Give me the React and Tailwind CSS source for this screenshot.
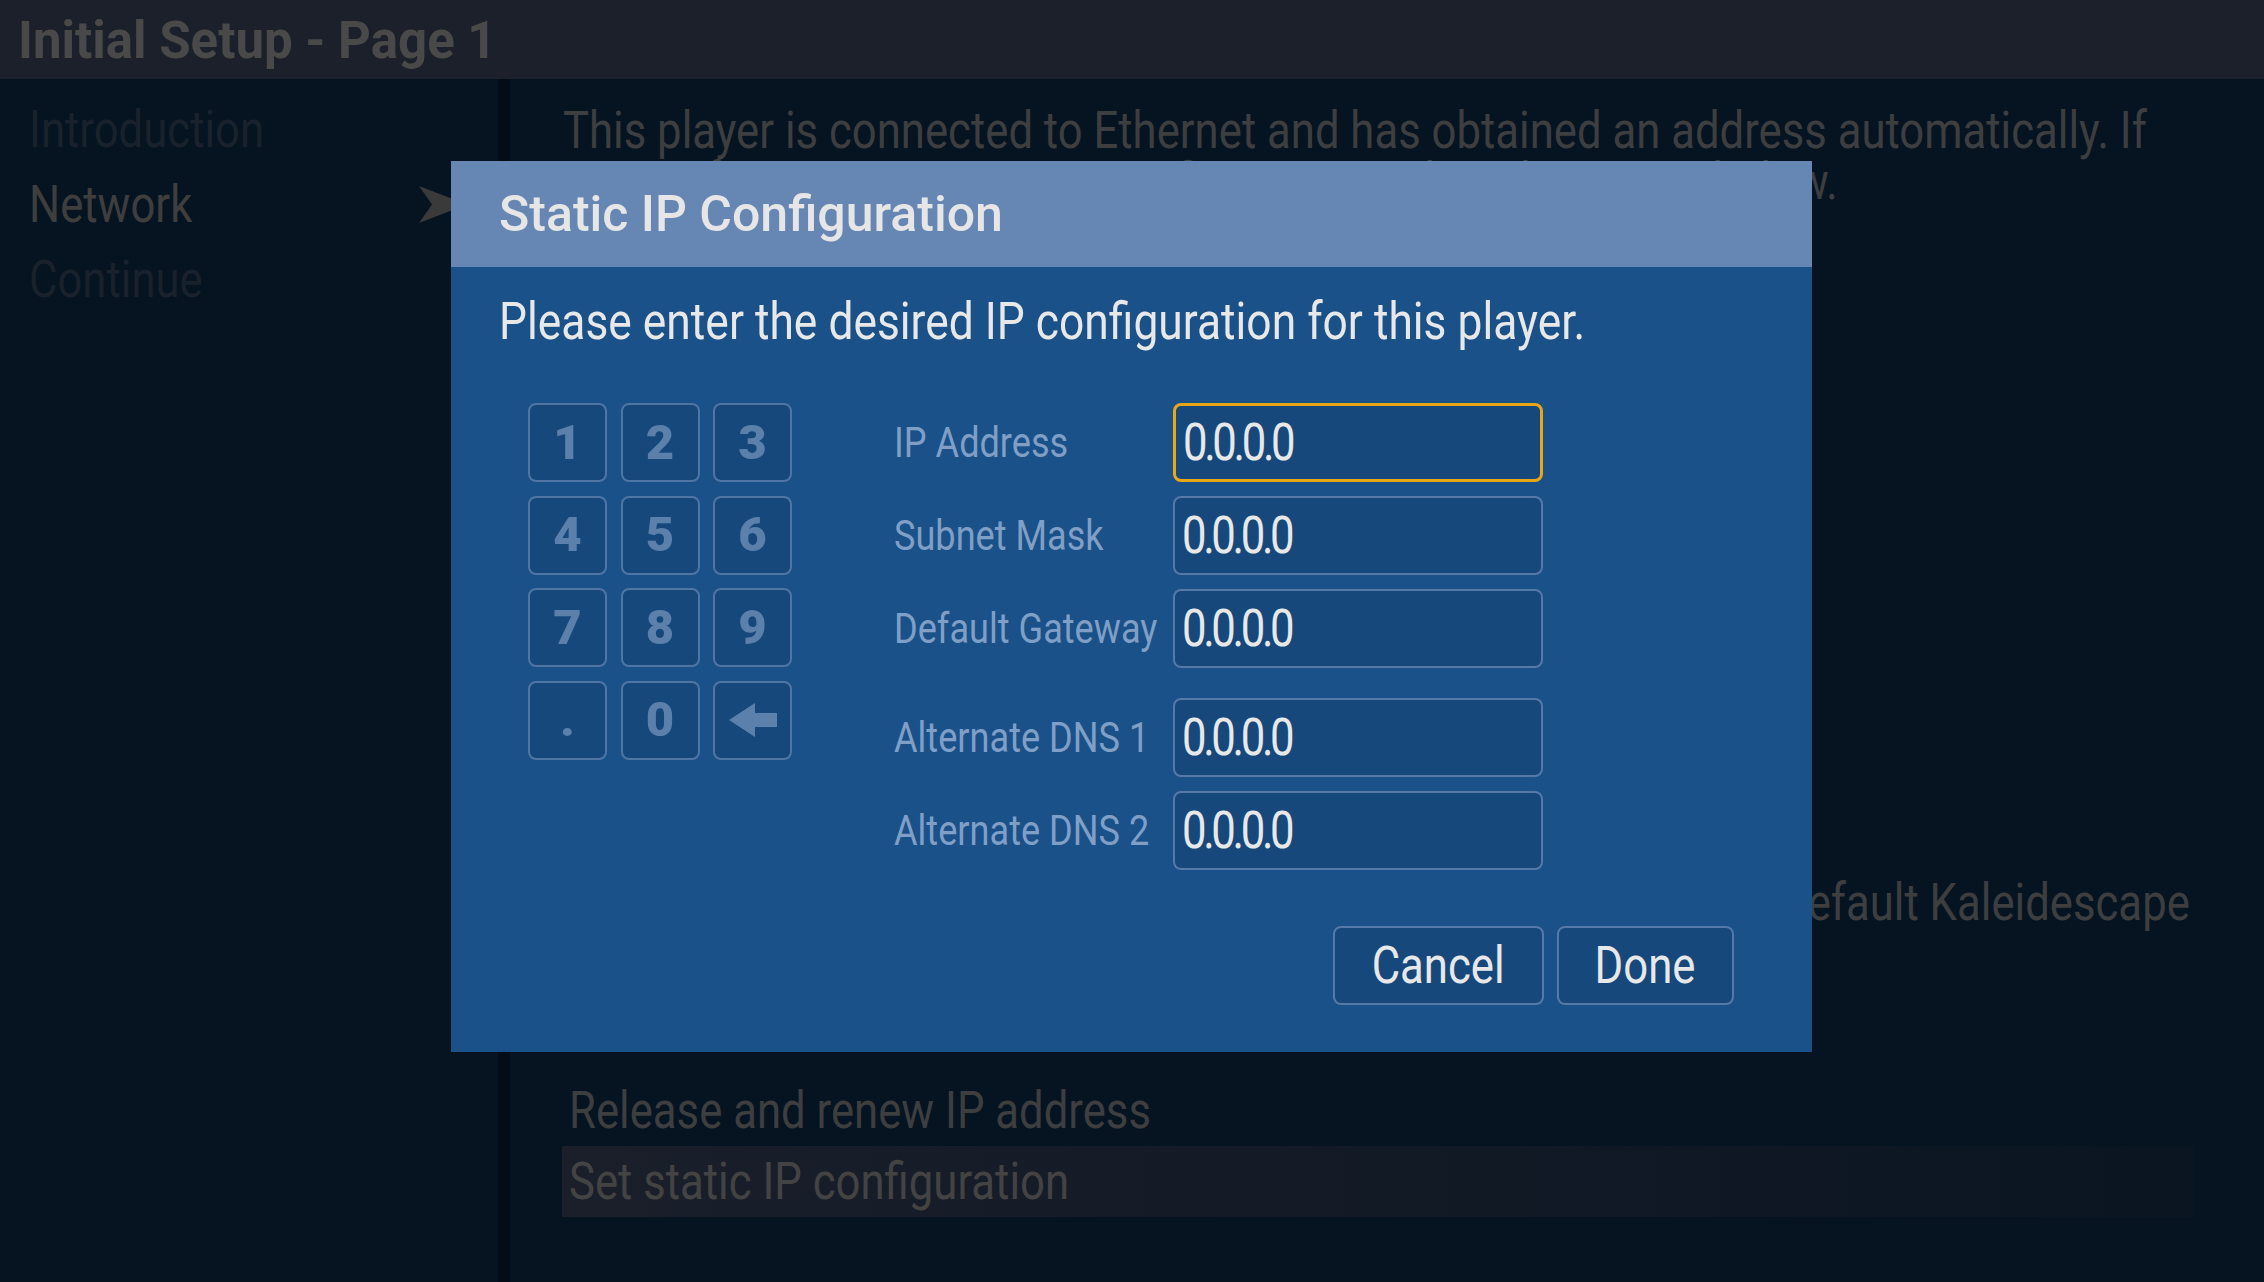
import { useState } from 'react';

const ROBOTO = { fontFamily: 'Roboto, "Liberation Sans", sans-serif' };

const KEYS = ['1', '2', '3', '4', '5', '6', '7', '8', '9', '.', '0', 'back'];

const FIELDS = [
  { id: 'ip', label: 'IP Address' },
  { id: 'mask', label: 'Subnet Mask' },
  { id: 'gateway', label: 'Default Gateway' },
  { id: 'dns1', label: 'Alternate DNS 1', spaced: true },
  { id: 'dns2', label: 'Alternate DNS 2' },
];

// the player UI uses a condensed face; squeeze Roboto to get the same widths
function Cond({ children, className = 'origin-left scale-x-[0.84]' }) {
  return <span className={`inline-block whitespace-nowrap ${className}`}>{children}</span>;
}

function BackArrow() {
  return (
    <svg width="48" height="34" viewBox="0 0 48 34" aria-hidden>
      <polygon points="0,17 26,0 26,10 48,10 48,24 26,24 26,34" fill="#5a80ab" />
    </svg>
  );
}

function Keypad() {
  return (
    <div className="grid grid-cols-[79px_79px_79px] auto-rows-[79px] gap-[13.5px]">
      {KEYS.map((k) => (
        <button
          key={k}
          type="button"
          className="flex items-center justify-center rounded-[8px] border-2 border-[#4f75a5] bg-[#17487c] text-[49px] font-black text-[#5a80ab]"
        >
          {k === 'back' ? <BackArrow /> : k}
        </button>
      ))}
    </div>
  );
}

function IpField({ field, focused }) {
  return (
    <div className={`flex items-center ${field.spaced ? 'mt-[16px]' : ''}`}>
      <span className="w-[279px] shrink-0 text-[43px] text-[#809fc6]">
        <Cond>{field.label}</Cond>
      </span>
      <div
        className={`flex h-[79px] w-[370px] items-center rounded-[8px] bg-[#17487c] pl-[7px] text-[52px] tracking-[-4px] text-[#e8e8e8] ${
          focused ? 'border-[3px] border-[#e9a616]' : 'border-2 border-[#5579a8]'
        }`}
      >
        <Cond>0.0.0.0</Cond>
      </div>
    </div>
  );
}

function DialogButton({ width, children }) {
  return (
    <button
      type="button"
      className={`flex h-[79px] items-center justify-center rounded-[8px] border-2 border-[#5579a8] bg-[#17487c] text-[52px] text-[#e8e8e8] ${width}`}
    >
      <Cond className="origin-center scale-x-[0.84]">{children}</Cond>
    </button>
  );
}

function StaticIpDialog() {
  const [focused] = useState('ip');

  return (
    <div className="absolute left-[451px] top-[161px] flex h-[891px] w-[1361px] flex-col bg-[#1a5189]">
      <div className="flex h-[106px] shrink-0 items-center bg-[#6686b4] pl-[48px]">
        <h2 className="text-[50px] font-medium text-[#e6e6e6]">Static IP Configuration</h2>
      </div>

      <div className="flex flex-1 flex-col pl-[48px] pr-[78px] pt-[26px]">
        <p className="text-[52px] leading-[58px] text-[#e8e8e8]">
          <Cond className="origin-left scale-x-[0.853]">
            Please enter the desired IP configuration for this player.
          </Cond>
        </p>

        <div className="mt-[52px] flex">
          <div className="ml-[29px]">
            <Keypad />
          </div>
          <div className="ml-[102px] flex flex-col gap-[14px]">
            {FIELDS.map((f) => (
              <IpField key={f.id} field={f} focused={focused === f.id} />
            ))}
          </div>
        </div>

        <div className="mt-[56px] flex justify-end gap-[13px]">
          <DialogButton width="w-[211px]">Cancel</DialogButton>
          <DialogButton width="w-[177px]">Done</DialogButton>
        </div>
      </div>
    </div>
  );
}

function Sidebar() {
  const items = [
    { label: 'Introduction', active: false },
    { label: 'Network', active: true },
    { label: 'Continue', active: false },
  ];
  return (
    <aside className="w-[498px] shrink-0 bg-[#061320] pt-[13px]">
      {items.map((item) => (
        <div key={item.label} className="flex h-[75px] items-center pl-[29px] pr-[31px]">
          <span
            className={`text-[52px] leading-[75px] ${item.active ? 'text-[#3e3e3f]' : 'text-[#19212c]'}`}
          >
            <Cond>{item.label}</Cond>
          </span>
          {item.active && (
            <svg className="ml-auto" width="48" height="37" viewBox="0 0 48 37" aria-hidden>
              <polygon points="0,0 48,18.5 0,37 13,18.5" fill="#3a3a3b" />
            </svg>
          )}
        </div>
      ))}
    </aside>
  );
}

export default function App() {
  return (
    <div
      className="relative flex h-[1282px] w-[2264px] flex-col overflow-hidden bg-[#061320]"
      style={ROBOTO}
    >
      <header className="flex h-[79px] shrink-0 items-center bg-[#1b202b] pl-[18px] pt-[4px]">
        <h1 className="text-[51px] font-bold text-[#4a4949]">Initial Setup - Page 1</h1>
      </header>

      <div className="flex flex-1">
        <Sidebar />
        <div className="w-[12px] shrink-0 bg-[#040d17]" />

        <main className="min-w-0 flex-1 pl-[52px] pr-[71px] pt-[26px] text-[#3d3e40]">
          <p className="pl-[1px] text-[52px] leading-[51px]">
            <Cond>
              This player is connected to Ethernet and has obtained an address automatically. If
              <br />
              you prefer to use a static IP configuration, select the option below.
            </Cond>
          </p>
          <p className="mt-[670px] pl-[47px] text-[52px] leading-[51px]">
            <Cond>
              To stop using a static IP configuration, you may return to the default Kaleidescape
              <br />
              settings.
            </Cond>
          </p>

          <ul className="mt-[96px] text-[52px] leading-[71px]">
            <li className="h-[71px] pl-[7px]">
              <Cond>Release and renew IP address</Cond>
            </li>
            <li className="h-[71px] bg-gradient-to-r from-[#1a1f2a] to-[#0a1521] pl-[7px] text-[#434344]">
              <Cond>Set static IP configuration</Cond>
            </li>
          </ul>
        </main>
      </div>

      <StaticIpDialog />
    </div>
  );
}
